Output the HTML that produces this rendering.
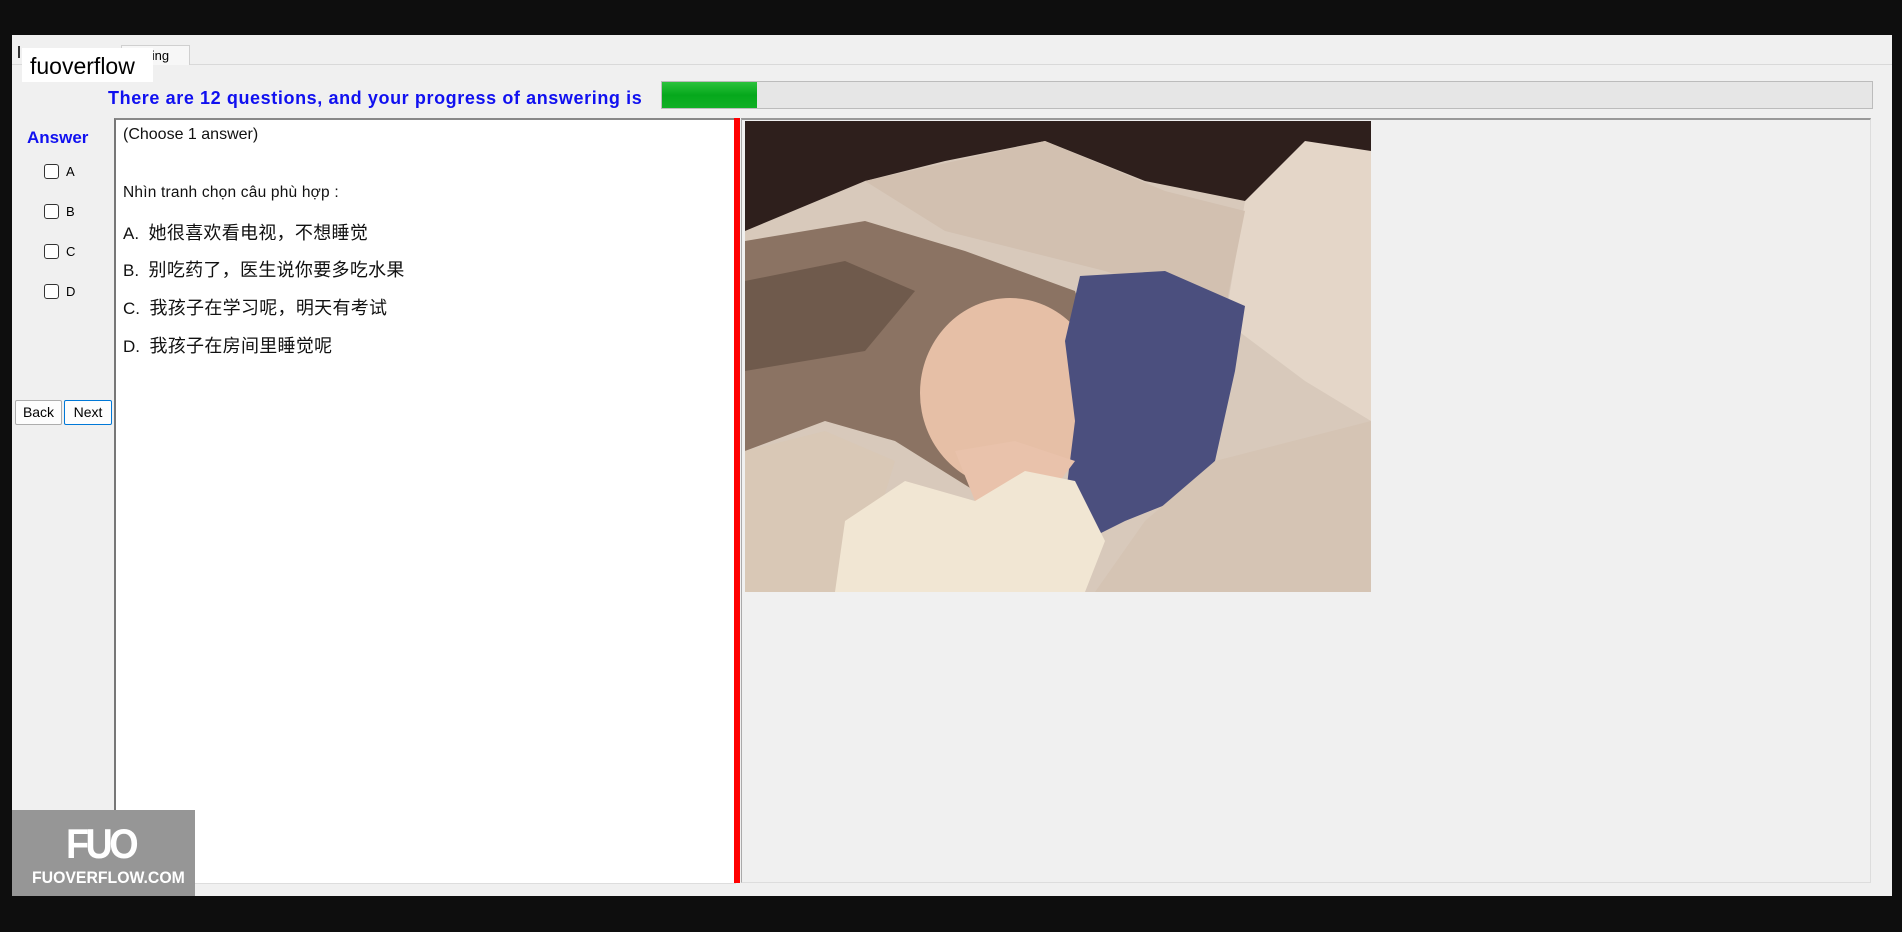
<!DOCTYPE html>
<html><head><meta charset="utf-8"><style>
body{margin:0;width:1902px;height:932px;background:#0e0e0e;position:relative;overflow:hidden;font-family:"Liberation Sans","Noto Sans CJK SC",sans-serif;}
.abs{position:absolute;}
#app{left:12px;top:35px;width:1880px;height:861px;background:#f0f0f0;}
.cb{position:absolute;left:44px;width:13px;height:13px;border:1px solid #333;border-radius:3px;background:#fff;}
.cl{position:absolute;left:66px;font-size:13px;color:#000;}
.btn{position:absolute;top:400px;height:23px;border:1px solid #adadad;background:#fdfdfd;font-size:14px;text-align:center;line-height:23px;border-radius:2px;}
.q{position:absolute;left:123px;font-size:17px;color:#111;}
.cj{font-size:18px;letter-spacing:0.3px}
</style></head><body>
<div id="app" class="abs"></div>
<div class="abs" style="left:12px;top:64px;width:1880px;height:1px;background:#d9d9d9"></div>
<div class="abs" style="left:121px;top:45px;width:67px;height:19px;border:1px solid #d0d0d0;border-bottom:none;background:#f7f7f7;font-size:13px;line-height:19px;"><span style="padding-left:16px">ching</span></div>
<div class="abs" style="left:18px;top:46px;width:2px;height:12px;background:#333"></div>
<div class="abs" style="left:22px;top:48px;width:131px;height:34px;background:#fff;font-size:23px;line-height:36px;"><span style="padding-left:8px">fuoverflow</span></div>
<div class="abs" style="left:108px;top:88px;font-size:18px;font-weight:bold;color:#1010f0;letter-spacing:0.6px;">There are 12 questions, and your progress of answering is</div>
<div class="abs" style="left:661px;top:81px;width:1210px;height:26px;background:#e6e6e6;border:1px solid #bcbcbc;"></div>
<div class="abs" style="left:662px;top:82px;width:95px;height:26px;background:linear-gradient(#2bc23c,#06a81c 50%,#10b025);"></div>
<div class="abs" style="left:27px;top:128px;font-size:17px;font-weight:bold;color:#1010f0;">Answer</div>
<div class="cb" style="top:164px"></div><div class="cl" style="top:164px">A</div>
<div class="cb" style="top:204px"></div><div class="cl" style="top:204px">B</div>
<div class="cb" style="top:244px"></div><div class="cl" style="top:244px">C</div>
<div class="cb" style="top:284px"></div><div class="cl" style="top:284px">D</div>
<div class="btn" style="left:15px;width:45px;">Back</div>
<div class="btn" style="left:64px;width:46px;border-color:#0078d7;">Next</div>
<div class="abs" style="left:114px;top:118px;width:620px;height:763px;background:#fff;border-left:2px solid #777;border-top:2px solid #888;border-bottom:1px solid #ddd;"></div>
<div class="q" style="top:126px;font-size:16px">(Choose 1 answer)</div>
<div class="q" style="top:184px;font-size:15.5px;letter-spacing:0.2px">Nhìn tranh chọn câu phù hợp :</div>
<div class="q" style="top:219px">A.&nbsp; <span class="cj">她很喜欢看电视，不想睡觉</span></div>
<div class="q" style="top:256px">B.&nbsp; <span class="cj">别吃药了，医生说你要多吃水果</span></div>
<div class="q" style="top:294px">C.&nbsp; <span class="cj">我孩子在学习呢，明天有考试</span></div>
<div class="q" style="top:332px">D.&nbsp; <span class="cj">我孩子在房间里睡觉呢</span></div>
<div class="abs" style="left:734px;top:118px;width:6px;height:765px;background:#f00;"></div>
<div class="abs" style="left:741px;top:118px;width:1128px;height:762px;border-top:2px solid #999;border-left:1px solid #aaa;border-right:1px solid #ddd;border-bottom:1px solid #ddd;background:#f0f0f0;"></div>
<svg class="abs" style="left:745px;top:121px" width="626" height="471" viewBox="0 0 626 471">
<rect width="626" height="471" fill="#d8c9bb"/>
<path d="M0 0H626V60L560 40 500 80 400 60 300 20 200 40 120 60 0 110Z" fill="#2e1f1c"/>
<path d="M500 80 560 20 626 30V300L560 260 480 200Z" fill="#e4d6c8"/>
<path d="M120 60 300 20 420 70 500 90 480 190 360 150 200 110Z" fill="#d2c0b0"/>
<path d="M0 120 120 100 220 130 330 170 360 260 300 350 230 370 150 320 80 300 0 330Z" fill="#8b7363"/>
<path d="M0 160 100 140 170 170 120 230 0 250Z" fill="#6f5a4c"/>
<ellipse cx="265" cy="272" rx="90" ry="95" fill="#e6bfa6"/>
<path d="M335 155 420 150 500 185 490 250 470 340 430 380 380 400 340 420 320 380 330 300 320 220Z" fill="#4b4f7e"/>
<path d="M210 330 270 320 330 340 300 380 230 380Z" fill="#e9c2ab"/>
<path d="M0 330 80 310 150 340 110 471H0Z" fill="#d9c8b6"/>
<path d="M100 400 160 360 230 380 280 350 330 360 360 420 340 471H90Z" fill="#f1e6d3"/>
<path d="M470 340 626 300V471H350L400 400Z" fill="#d5c4b4"/>
</svg>
<div class="abs" style="left:12px;top:810px;width:183px;height:86px;background:#969696;"></div>
<div class="abs" style="left:66px;top:820px;font-size:42px;font-weight:bold;color:#fff;letter-spacing:-4px;transform:scaleX(0.9);transform-origin:left;">FUO</div>
<div class="abs" style="left:32px;top:868px;font-size:17px;font-weight:bold;color:#fff;transform:scaleX(0.93);transform-origin:left;">FUOVERFLOW.COM</div>
</body></html>
